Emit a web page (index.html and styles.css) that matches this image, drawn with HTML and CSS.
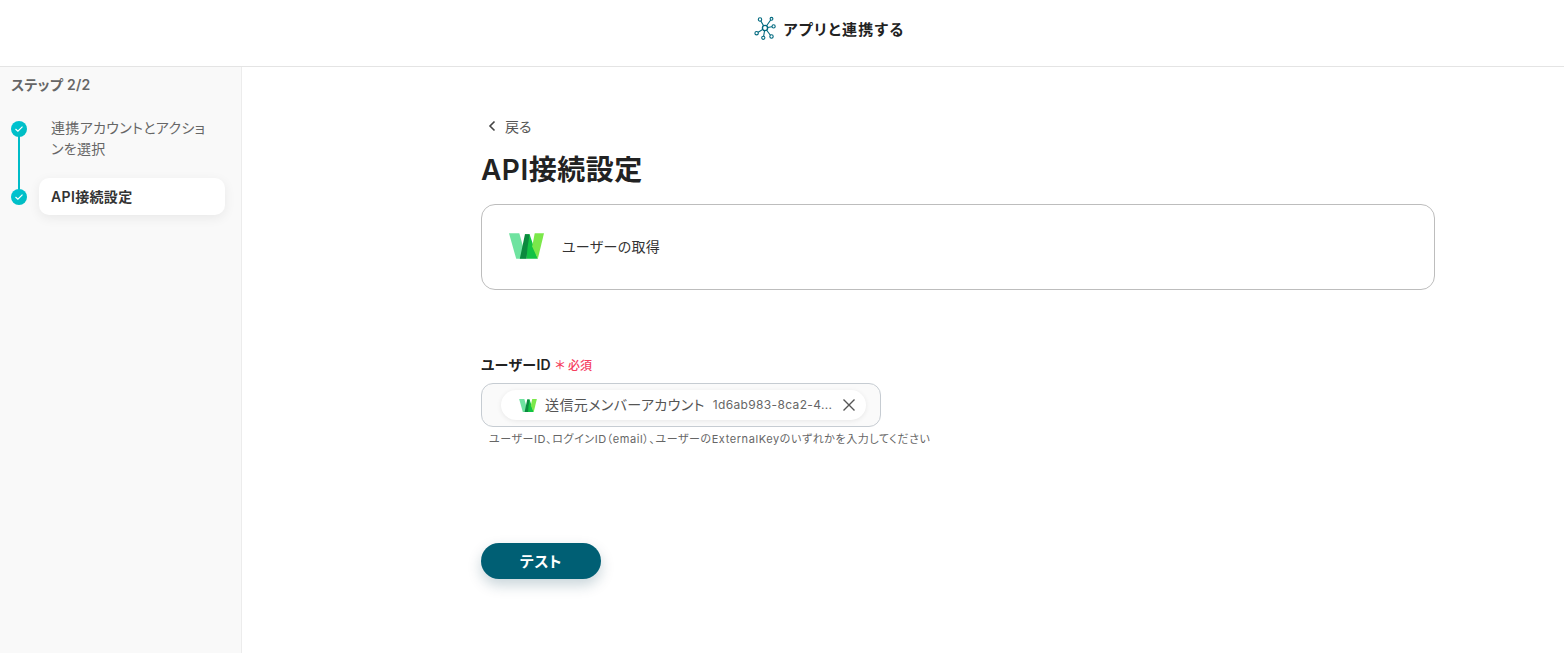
FILE: index.html
```html
<!DOCTYPE html>
<html lang="ja">
<head>
    <meta charset="UTF-8">
    <meta name="viewport" content="width=device-width, initial-scale=1.0">
    <title>アプリと連携する</title>
    <link rel="stylesheet" href="styles.css">
</head>
<body>
    <header class="topbar">
        <svg class="topbar-icon" width="22" height="24" viewBox="0 0 22 24" fill="none" stroke="#00697f" stroke-width="1.1">
            <path d="M11 12 L6.5 4.5 M11 12 L17 3.5 M11 12 L19 10.5 M11 12 L17 20 M11 12 L9.5 21 M11 12 L3 17"/>
            <circle cx="11" cy="12" r="2.6" fill="#fff" stroke-width="1.4"/>
            <circle cx="6" cy="3.5" r="1.7" fill="#fff"/>
            <circle cx="17.5" cy="2.8" r="1.4" fill="#fff"/>
            <circle cx="19.6" cy="10.4" r="1.6" fill="#fff"/>
            <circle cx="17.5" cy="20.5" r="1.7" fill="#fff"/>
            <circle cx="9.3" cy="21.8" r="1.6" fill="#fff"/>
            <circle cx="2.6" cy="17.2" r="1.7" fill="#fff"/>
        </svg>
        <span class="topbar-title">アプリと連携する</span>
    </header>

    <div class="layout">
        <aside class="sidebar">
            <div class="step-count">ステップ 2/2</div>
            <ol class="steps">
                <li class="step step-first">
                    <span class="step-dot">
                        <svg width="10" height="8" viewBox="0 0 10 8" fill="none" stroke="#fff" stroke-width="1.2"><path d="M1.5 4 L3.9 6.2 L8.5 1.6"/></svg>
                    </span>
                    <span class="step-label">連携アカウントとアクションを選択</span>
                </li>
                <li class="step step-current">
                    <span class="step-dot">
                        <svg width="10" height="8" viewBox="0 0 10 8" fill="none" stroke="#fff" stroke-width="1.2"><path d="M1.5 4 L3.9 6.2 L8.5 1.6"/></svg>
                    </span>
                    <span class="step-label">API接続設定</span>
                </li>
            </ol>
        </aside>

        <main class="content">
            <a class="back" href="#">
                <svg width="10" height="12" viewBox="0 0 10 12" fill="none" stroke="#444" stroke-width="1.6"><path d="M7.5 1.5 L3 6 L7.5 10.5"/></svg>
                <span>戻る</span>
            </a>
            <h1 class="page-title">API接続設定</h1>

            <div class="action-card">
                <svg class="logo-large" width="35" height="26" viewBox="0 0 34 25">
                    <polygon points="0,0 10,0 17,25 7,25" fill="#6fe3a0"/>
                    <polygon points="15.5,1 20,1 28,25 17,25" fill="#12c244"/>
                    <polygon points="10.5,25 15.5,1 20,1 18,14 17,25" fill="#0b8a3e"/>
                    <polygon points="25,0 34,0 28,25 22.5,13" fill="#7be84a"/>
                </svg>
                <span>ユーザーの取得</span>
            </div>

            <div class="field">
                <div class="field-label">
                    <span class="field-name">ユーザーID</span>
                    <span class="required">＊ 必須</span>
                </div>
                <div class="input-box">
                    <div class="chip">
                        <svg class="logo-small" width="18" height="13" viewBox="0 0 34 25">
                            <polygon points="0,0 10,0 17,25 7,25" fill="#6fe3a0"/>
                            <polygon points="15.5,1 20,1 28,25 17,25" fill="#12c244"/>
                            <polygon points="10.5,25 15.5,1 20,1 18,14 17,25" fill="#0b8a3e"/>
                            <polygon points="25,0 34,0 28,25 22.5,13" fill="#7be84a"/>
                        </svg>
                        <span class="chip-name">送信元メンバーアカウント</span>
                        <span class="chip-value">1d6ab983-8ca2-4...</span>
                        <svg class="chip-close" width="14" height="14" viewBox="0 0 14 14" fill="none" stroke="#555" stroke-width="1.4"><path d="M1.5 1.5 L12.5 12.5 M12.5 1.5 L1.5 12.5"/></svg>
                    </div>
                </div>
                <p class="hint">ユーザーID、ログインID（email）、ユーザーのExternalKeyのいずれかを入力してください</p>
            </div>

            <button class="test-button">テスト</button>
        </main>
    </div>
</body>
</html>
```

FILE: styles.css
```css
* {
    box-sizing: border-box;
}
html, body {
    height: 100%;
}
body {
    margin: 0;
    font-family: Inter, "Noto Sans CJK JP", sans-serif;
    font-feature-settings: "palt";
    color: #222;
    background-color: #fff;
    overflow: hidden;
}
.topbar {
    height: 67px;
    border-bottom: 1px solid #e4e4e4;
    display: flex;
    align-items: center;
    justify-content: center;
    gap: 8px;
    padding-left: 94px;
    padding-bottom: 10px;
}
.topbar-title {
    font-size: 15px;
    font-weight: 600;
    letter-spacing: 1.3px;
    color: #222;
}
.layout {
    display: flex;
    height: 586px;
}
.sidebar {
    width: 242px;
    background-color: #f9f9f9;
    border-right: 1px solid #ececec;
    padding: 9px 16px 0 11px;
}
.step-count {
    font-size: 14px;
    font-weight: 600;
    letter-spacing: 0.3px;
    color: #666;
    line-height: 18px;
}
.steps {
    list-style: none;
    margin: 24px 0 0;
    padding: 0;
}
.step {
    display: flex;
    align-items: flex-start;
    position: relative;
}
.step-dot {
    flex: none;
    width: 16px;
    height: 16px;
    border-radius: 50%;
    background: linear-gradient(135deg, #00c4d4, #00bcc0);
    display: flex;
    align-items: center;
    justify-content: center;
}
.step-first {
    height: 60px;
    padding-top: 3px;
}
.step-first::after {
    content: "";
    position: absolute;
    left: 7px;
    top: 18px;
    width: 2px;
    height: 54px;
    background-color: #00bcc8;
}
.step-first .step-label {
    margin-left: 24px;
    margin-top: -4px;
    font-size: 14px;
    letter-spacing: 0.33px;
    line-height: 21px;
    color: #666;
    width: 160px;
}
.step-current {
    align-items: center;
    height: 37px;
}
.step-current .step-label {
    margin-left: 12px;
    width: 186px;
    height: 37px;
    padding-left: 12px;
    background-color: #fff;
    border-radius: 10px;
    box-shadow: 0 3px 12px rgba(0, 0, 0, 0.07);
    font-size: 14px;
    font-weight: 600;
    letter-spacing: 0.35px;
    line-height: 37px;
    color: #333;
}
.content {
    flex: 1;
    padding: 49px 129px 0 239px;
}
.back {
    display: flex;
    align-items: center;
    gap: 8px;
    margin-left: 6px;
    height: 20px;
    font-size: 14px;
    color: #555;
    text-decoration: none;
}
.page-title {
    margin: 13px 0 0;
    font-size: 28px;
    font-weight: 600;
    letter-spacing: 0.5px;
    line-height: 42px;
    color: #222;
}
.action-card {
    margin-top: 13px;
    height: 86px;
    border: 1px solid #bdbdbd;
    border-radius: 14px;
    display: flex;
    align-items: center;
    gap: 18px;
    padding-left: 27px;
    padding-bottom: 2px;
    font-size: 14px;
    letter-spacing: 0.3px;
    color: #333;
}
.field {
    margin-top: 64px;
}
.field-label {
    display: flex;
    align-items: center;
    gap: 4px;
    height: 20px;
}
.field-name {
    font-size: 14px;
    font-weight: 600;
    letter-spacing: 0.3px;
    color: #222;
}
.required {
    font-size: 12px;
    font-weight: 500;
    color: #f5405f;
}
.input-box {
    margin-top: 9px;
    width: 400px;
    height: 44px;
    border: 1px solid #c6ccd2;
    border-radius: 12px;
    padding: 6px 14px 0 19px;
    background-color: #fafafa;
}
.chip {
    height: 30px;
    border-radius: 15px;
    background-color: #fff;
    box-shadow: 0 1px 5px rgba(0, 0, 0, 0.08);
    display: flex;
    align-items: center;
    padding: 0 10px 0 18px;
}
.chip-name {
    margin-left: 8px;
    margin-bottom: 2px;
    font-size: 14px;
    letter-spacing: 0.4px;
    color: #555;
}
.chip-value {
    margin-left: 8px;
    margin-bottom: 2px;
    font-size: 12px;
    letter-spacing: 0.35px;
    color: #666;
}
.chip-close {
    margin-left: auto;
}
.hint {
    margin: 4px 0 0 8px;
    font-size: 11px;
    letter-spacing: 0.58px;
    line-height: 16px;
    color: #666;
}
.test-button {
    display: block;
    margin-top: 96px;
    width: 120px;
    height: 36px;
    padding: 0 0 2px;
    border: none;
    border-radius: 18px;
    background-color: #005f74;
    color: #fff;
    font-family: inherit;
    font-feature-settings: inherit;
    font-size: 15px;
    font-weight: 600;
    letter-spacing: 0.6px;
    box-shadow: 0 6px 14px rgba(0, 60, 80, 0.22);
}
```
